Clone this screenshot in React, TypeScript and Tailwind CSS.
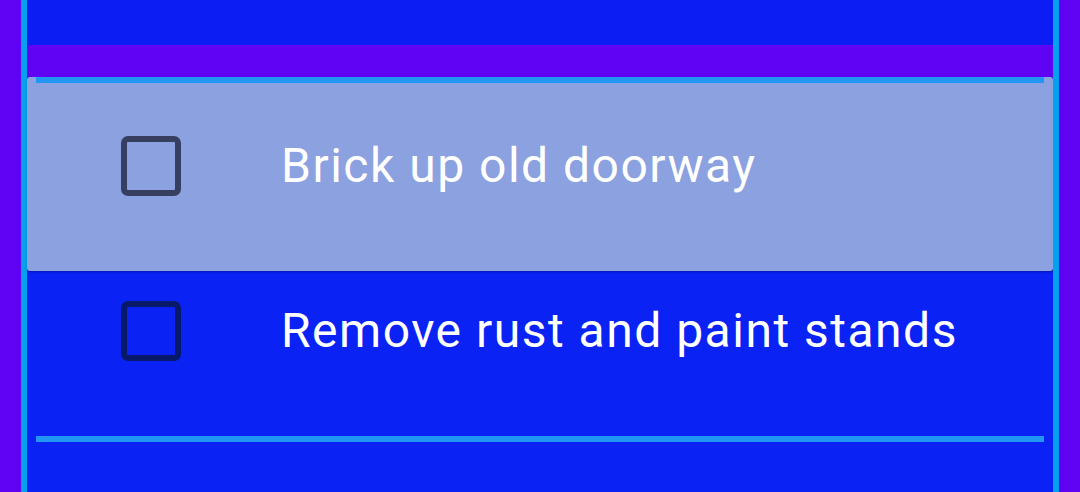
const Box = ({ tone }: { tone: string }) => (
  <div className={`w-[60px] h-[60px] rounded-[7px] border-[6px] ${tone}`} />
);

const TaskRow = ({
  label,
  tone,
  className,
}: {
  label: string;
  tone: string;
  className: string;
}) => (
  <div className={`flex items-center ${className}`}>
    <div className="w-[94px] shrink-0" />
    <Box tone={tone} />
    <span className="ml-[100px] text-white text-[48px] leading-none tracking-[1.5px] font-['Roboto',sans-serif]">
      {label}
    </span>
  </div>
);

export default function App() {
  return (
    <div className="w-[1080px] h-[492px] bg-[#6003f5] flex px-[21px] overflow-hidden">
      <div className="w-[6px] bg-[#04a1f1]" />

      <div className="flex-1 flex flex-col bg-[#0a22f4]">
        {/* header strip */}
        <div className="h-[45px] bg-[#0b1df3]" />
        <div className="h-[32px] bg-[#6003f5]" />

        {/* dragged item */}
        <div className="h-[194px] bg-[#8ca1e0] rounded-[3px] flex flex-col shadow-[0_1px_2px_rgba(0,0,40,0.35)]">
          <div className="h-[6px] mx-[9px] bg-[#2196f3]" />
          <TaskRow
            label="Brick up old doorway"
            tone="border-[#363f5f]"
            className="h-[168px] pb-[2px]"
          />
        </div>

        <TaskRow
          label="Remove rust and paint stands"
          tone="border-[#09196a]"
          className="h-[165px] pb-[46px]"
        />

        <div className="h-[6px] mx-[9px] bg-[#2196f3]" />
        <div className="flex-1" />
      </div>

      <div className="w-[6px] bg-[#04a1f1]" />
    </div>
  );
}
